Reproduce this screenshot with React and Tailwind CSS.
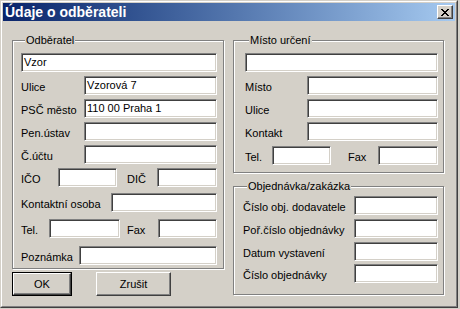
import React from 'react';

const sunken = 'bg-white border border-t-[#808080] border-l-[#808080] border-r-white border-b-white shadow-[inset_1px_1px_0_#404040,inset_-1px_-1px_0_#d4d0c8]';
const etched = 'border border-[#808080] shadow-[1px_1px_0_white,inset_1px_1px_0_white]';

const Field = ({ w, value = '', className = '' }) => (
	<div className={`${sunken} h-[19px] ${w} ${className} px-[2px] pt-[2px] leading-[13px] text-[11px] text-black overflow-hidden whitespace-nowrap`}>{value}</div>
);

const Label = ({ children, className = '' }) => (
	<span className={`leading-[13px] pt-[5px] self-start whitespace-nowrap ${className}`}>{children}</span>
);

const Group = ({ title, className = '', children }) => (
	<fieldset className={`${etched} ${className}`}>
		<legend className="ml-[4px] px-[1px] bg-[#d4d0c8] leading-[13px] text-[11px]">{title}</legend>
		{children}
	</fieldset>
);

const Row = ({ className = '', children }) => <div className={`flex h-[19px] ${className}`}>{children}</div>;

const App = () => {
	return (
		<div className="w-[460px] h-[309px] bg-[#d4d0c8] text-[11px] text-black" style={{ fontFamily: '"Liberation Sans", Arial, sans-serif' }}>
			<div className="w-[458px] h-[308px] border border-t-[#d4d0c8] border-l-[#d4d0c8] border-r-[#404040] border-b-[#404040]">
				<div className="h-full border border-t-white border-l-white border-r-[#808080] border-b-[#808080] p-[1px] flex flex-col">
					{/* title bar */}
					<div className="h-[18px] flex items-center justify-between bg-gradient-to-r from-[#0a246a] to-[#a6caf0]">
						<span className="pl-[2px] text-white font-bold text-[14px] leading-[18px]">Údaje o odběrateli</span>
						<button className="mr-[2px] w-[16px] h-[14px] bg-[#d4d0c8] border border-t-white border-l-white border-r-[#404040] border-b-[#404040] shadow-[inset_-1px_-1px_0_#808080] flex items-center justify-center">
							<svg width="8" height="7" viewBox="0 0 8 7" shapeRendering="crispEdges">
								<path d="M0 0h2v1H0zM6 0h2v1H6zM1 1h2v1H1zM5 1h2v1H5zM2 2h4v1H2zM3 3h2v1H3zM2 4h4v1H2zM1 5h2v1H1zM5 5h2v1H5zM0 6h2v1H0zM6 6h2v1H6z" fill="black" />
							</svg>
						</button>
					</div>

					<div className="flex pl-[9px]">
						{/* left column */}
						<div className="flex flex-col w-[212px]">
							<Group title="Odběratel" className="mt-[13px] h-[235px] pl-[8px] pr-[6px] pt-[6px]">
								<Field w="w-full" value="Vzor" />
								<Row className="mt-[4px]"><Label className="w-[63px]">Ulice</Label><Field w="flex-1" value="Vzorová 7" /></Row>
								<Row className="mt-[4px]"><Label className="w-[63px]">PSČ město</Label><Field w="flex-1" value="110 00 Praha 1" /></Row>
								<Row className="mt-[4px]"><Label className="w-[63px]">Pen.ústav</Label><Field w="flex-1" /></Row>
								<Row className="mt-[4px]"><Label className="w-[63px]">Č.účtu</Label><Field w="flex-1" /></Row>
								<Row className="mt-[4px]">
									<Label className="w-[37px]">IČO</Label><Field w="w-[59px]" />
									<Label className="ml-[10px] w-[30px]">DIČ</Label><Field w="flex-1" />
								</Row>
								<Row className="mt-[6px]"><Label className="w-[90px]">Kontaktní osoba</Label><Field w="flex-1" /></Row>
								<Row className="mt-[7px]">
									<Label className="w-[28px]">Tel.</Label><Field w="w-[71px]" />
									<Label className="ml-[7px] w-[31px]">Fax</Label><Field w="flex-1" />
								</Row>
								<Row className="mt-[8px]"><Label className="w-[58px]">Poznámka</Label><Field w="flex-1" /></Row>
							</Group>
							<div className="flex mt-[3px] items-start">
								<div className="border border-black">
									<button className="w-[58px] h-[22px] border border-t-white border-l-white border-r-[#404040] border-b-[#404040] shadow-[inset_-1px_-1px_0_#808080] text-[11px] leading-[13px]">OK</button>
								</div>
								<button className="ml-[24px] w-[75px] h-[24px] border border-t-white border-l-white border-r-[#404040] border-b-[#404040] shadow-[inset_-1px_-1px_0_#808080] text-[11px] leading-[13px]">Zrušit</button>
							</div>
						</div>

						{/* right column */}
						<div className="flex flex-col ml-[9px] w-[211px]">
							<Group title="Místo určení" className="mt-[13px] h-[139px] pl-[11px] pr-[5px] pt-[6px]">
								<Field w="w-full" />
								<Row className="mt-[4px]"><Label className="w-[62px]">Místo</Label><Field w="flex-1" /></Row>
								<Row className="mt-[4px]"><Label className="w-[62px]">Ulice</Label><Field w="flex-1" /></Row>
								<Row className="mt-[4px]"><Label className="w-[62px]">Kontakt</Label><Field w="flex-1" /></Row>
								<Row className="mt-[5px]">
									<Label className="w-[27px]">Tel.</Label><Field w="w-[59px]" />
									<Label className="ml-[17px] w-[30px]">Fax</Label><Field w="flex-1" />
								</Row>
							</Group>
							<Group title="Objednávka/zakázka" className="mt-[7px] h-[115px] pl-[9px] pr-[5px] pt-[3px]">
								<Row><Label className="w-[111px]">Číslo obj. dodavatele</Label><Field w="flex-1" /></Row>
								<Row className="mt-[4px]"><Label className="w-[111px]">Poř.číslo objednávky</Label><Field w="flex-1" /></Row>
								<Row className="mt-[4px]"><Label className="w-[111px]">Datum vystavení</Label><Field w="flex-1" /></Row>
								<Row className="mt-[3px]"><Label className="w-[111px]">Číslo objednávky</Label><Field w="flex-1" /></Row>
							</Group>
						</div>
					</div>
				</div>
			</div>
		</div>
	);
};

export default App;
